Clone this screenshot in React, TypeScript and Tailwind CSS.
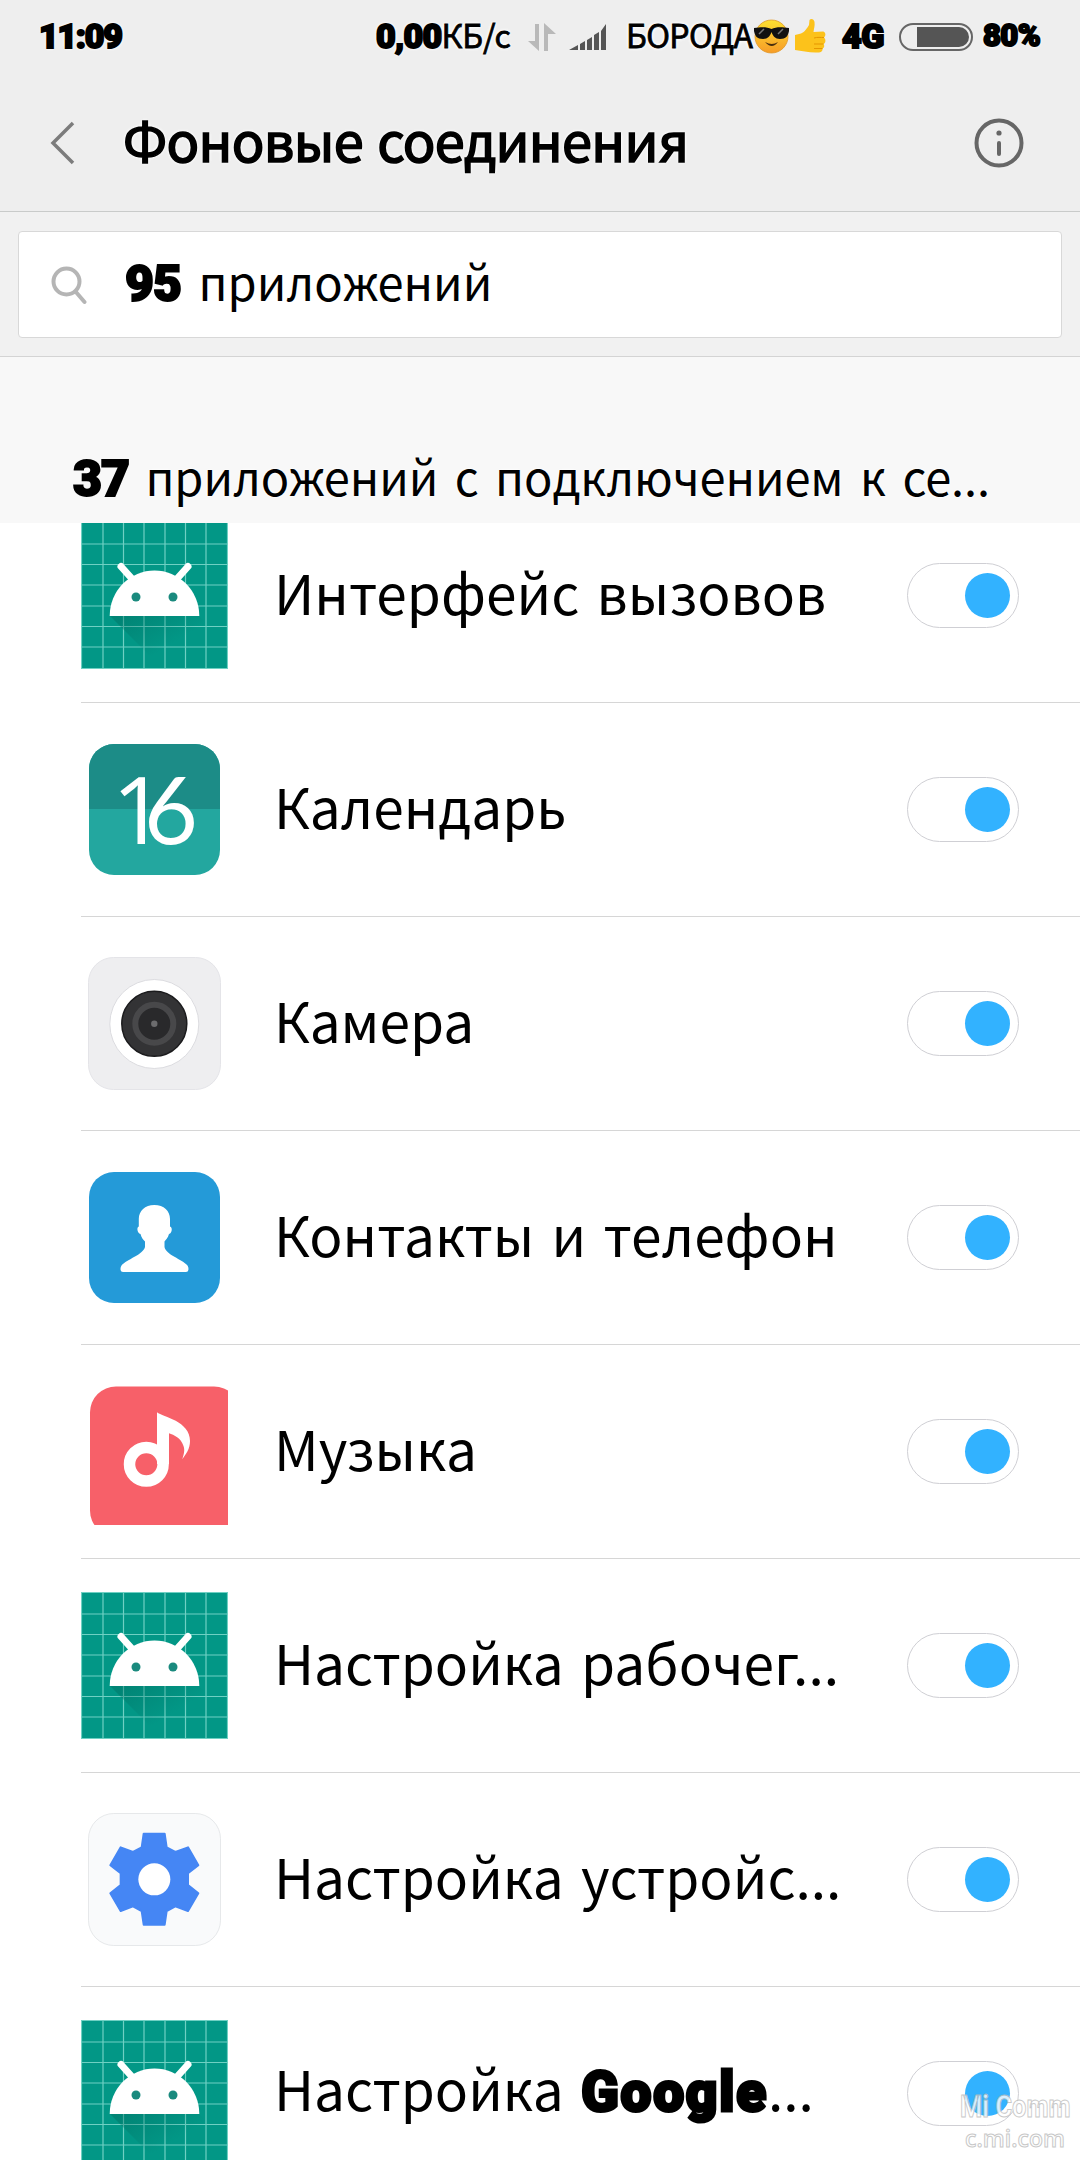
import { useState } from "react";
import type { ReactNode } from "react";

interface AppItem {
  id: number;
  name: ReactNode;
  icon: ReactNode;
}

function AndroidIcon() {
  const lines = [0.5, 22, 42.5, 63, 84, 104.5, 125, 146.5];
  return (
    <svg width="147" height="147" viewBox="0 0 147 147">
      <defs>
        <linearGradient id="shade" x1="45" y1="94" x2="70" y2="135" gradientUnits="userSpaceOnUse">
          <stop offset="0" stopColor="#00695c" stopOpacity="0.4" />
          <stop offset="1" stopColor="#00695c" stopOpacity="0" />
        </linearGradient>
      </defs>
      <rect width="147" height="147" fill="#029786" />
      {lines.map((p) => (
        <path key={p} d={`M${p} 0V147M0 ${p}H147`} stroke="#6fd0c3" strokeWidth="1.2" />
      ))}
      <path d="M29 94H118L147 123V147H82Z" fill="url(#shade)" />
      <path d="M40 44.5L53 59M107 44.5L94 59" stroke="#fff" strokeWidth="7" strokeLinecap="round" />
      <path d="M28.7 94A44.8 45.5 0 0 1 118.3 94Z" fill="#fff" />
      <circle cx="55" cy="75" r="4.5" fill="#1a8a7e" />
      <circle cx="92" cy="75" r="4.5" fill="#1a8a7e" />
    </svg>
  );
}

function CalendarIcon() {
  return (
    <svg width="131" height="131" viewBox="0 0 131 131">
      <defs>
        <clipPath id="cal">
          <rect width="131" height="131" rx="25" />
        </clipPath>
      </defs>
      <g clipPath="url(#cal)">
        <rect width="131" height="131" fill="#23a79f" />
        <rect width="131" height="65" fill="#1c8c87" />
      </g>
      <g fill="#fff">
        <text x="23" y="100" fontSize="94" fontFamily="Open Sans">
          1
        </text>
        <text x="55" y="100" fontSize="93" fontFamily="Lato">
          6
        </text>
      </g>
    </svg>
  );
}

function CameraIcon() {
  return (
    <svg width="133" height="133" viewBox="0 0 133 133">
      <rect x="0.5" y="0.5" width="132" height="132" rx="25" fill="#eeeef0" stroke="#e4e4e8" />
      <circle cx="66.3" cy="67" r="44.5" fill="#fff" stroke="#dcdce0" />
      <circle cx="66.3" cy="66.7" r="32.5" fill="#333335" stroke="#1b1b1d" strokeWidth="1.5" />
      <circle cx="66.3" cy="66.7" r="19" fill="#29292b" stroke="#48484a" strokeWidth="6" />
      <circle cx="66.3" cy="66.7" r="3.2" fill="#6c6c6e" />
    </svg>
  );
}

function ContactsIcon() {
  return (
    <svg width="131" height="131" viewBox="0 0 131 131">
      <rect width="131" height="131" rx="25" fill="#249ad8" />
      <path
        d="M65.3 33C75 33 81 39 81 47V54.5C83.5 55 83.5 61 80 62C79 66 77 67.5 75.5 69.5V75C77 83 93 87 98.5 93.5C100 96 100 100 97 100H34C31 100 31 96 32.5 93.5C38 87 54 83 56 75V69.5C54 67.5 52.5 66 51.5 62C48 61 47.5 55 49.8 54.5V47C49.8 39 56 33 65.3 33Z"
        fill="#fff"
      />
    </svg>
  );
}

function MusicIcon() {
  return (
    <svg width="147" height="147" viewBox="0 0 147 147">
      <rect x="9" y="8.5" width="150" height="150" rx="26" fill="#f76069" />
      <circle cx="65.3" cy="86.3" r="16.8" fill="none" stroke="#fff" strokeWidth="11.5" />
      <path
        d="M76 34.3C82 39 109 43 109 63C109 71 105 76 101.3 81.3C103 76 104 72 102.5 68C100 60 93 57 88 55.3V86H76Z"
        fill="#fff"
      />
    </svg>
  );
}

function GearIcon() {
  return (
    <svg width="133" height="133" viewBox="0 0 399 399">
      <rect x="1.5" y="1.5" width="396" height="396" rx="76" fill="#f9fafb" stroke="#e6e8ea" strokeWidth="3" />
      <path
        d="M167 62H230L236 103L262 117L300 103L331 157L300 181V216L331 241L300 294L262 280L236 294L230 335H167L161 294L135 280L98 294L67 241L98 216V181L67 157L98 103L135 117L161 103Z"
        fill="#4586f4"
        stroke="#4586f4"
        strokeWidth="6"
        strokeLinejoin="round"
      />
      <circle cx="199" cy="199" r="48" fill="#fff" />
    </svg>
  );
}

function Heavy({ children, className = "" }: { children: ReactNode; className?: string }) {
  return (
    <span className={`font-[Roboto] font-black [-webkit-text-stroke-color:#000] ${className}`}>
      {children}
    </span>
  );
}

const APPS: AppItem[] = [
  { id: 1, name: "Интерфейс вызовов", icon: <AndroidIcon /> },
  { id: 2, name: "Календарь", icon: <CalendarIcon /> },
  { id: 3, name: "Камера", icon: <CameraIcon /> },
  { id: 4, name: "Контакты и телефон", icon: <ContactsIcon /> },
  { id: 5, name: "Музыка", icon: <MusicIcon /> },
  { id: 6, name: "Настройка рабочег...", icon: <AndroidIcon /> },
  { id: 7, name: "Настройка устройс...", icon: <GearIcon /> },
  {
    id: 8,
    name: (
      <>
        Настройка{" "}
        <Heavy className="tracking-[1.8px] [-webkit-text-stroke-width:3px]">Google</Heavy>...
      </>
    ),
    icon: <AndroidIcon />,
  },
];

function Toggle({ on, onClick }: { on: boolean; onClick: () => void }) {
  return (
    <button
      role="switch"
      aria-checked={on}
      onClick={onClick}
      className={`flex h-[65px] w-[112px] shrink-0 items-center rounded-full border border-[#cfcfd4] bg-white px-2 ${
        on ? "justify-end" : "justify-start"
      }`}
    >
      <span className={`size-[45px] rounded-full ${on ? "bg-[#32b2ff]" : "bg-gray-300"}`} />
    </button>
  );
}

function StatusBar() {
  return (
    <div className="flex h-[74px] items-center text-[32px] leading-none whitespace-nowrap">
      <Heavy className="mb-[3px] ml-[39px] w-[337px] text-[34px] tracking-[-1.3px] [-webkit-text-stroke-width:2px]">
        11:09
      </Heavy>
      <div className="mb-[7px] flex w-[151px] items-center">
        <Heavy className="mt-1 text-[34px] tracking-[-0.7px] [-webkit-text-stroke-width:2px]">0,00</Heavy>
        <span className="[-webkit-text-stroke:0.8px_#000]">КБ/с</span>
      </div>
      <svg width="30" height="30" viewBox="0 0 30 30" className="shrink-0" fill="#b9b9b9">
        <path d="M8 2H12V29L1 19H8Z" />
        <path d="M17 29H21V12H29L17 1Z" />
      </svg>
      <svg width="38" height="28" viewBox="0 0 38 28" className="ml-3 shrink-0" fill="#555">
        <path d="M0 27L9 22V27ZM11 21L16 18V27H11ZM18 17L23 14V27H18ZM25 12L30 9V27H25ZM32 8L37 1V27H32Z" />
      </svg>
      <span className="mb-[7px] ml-[19px] w-[128px] tracking-[-0.6px] [-webkit-text-stroke:0.8px_#000]">
        БОРОДА
      </span>
      <svg width="35" height="35" viewBox="0 0 35 35" className="mb-0.5 shrink-0">
        <defs>
          <linearGradient id="face" x1="0" y1="0" x2="0" y2="1">
            <stop offset="0" stopColor="#fde030" />
            <stop offset="1" stopColor="#f79c28" />
          </linearGradient>
        </defs>
        <circle cx="17.5" cy="17.5" r="16.5" fill="url(#face)" stroke="#e0982a" strokeWidth="0.8" />
        <path
          d="M0 9C8 8 13 8 17.5 10C22 8 27 8 35 9V12C34 17 32 20 26 20C21 20 19 17 17.5 13C16 17 14 20 9 20C3 20 1 17 0 12Z"
          fill="#111"
        />
        <path d="M5 15L10 10M24 15L29 10" stroke="#777" strokeWidth="1.5" />
        <path d="M11 23Q18 27 24 23Q18 31 11 23Z" fill="#4a2f0e" />
      </svg>
      <svg width="32" height="35" viewBox="0 0 32 35" className="mb-1 ml-[5px] shrink-0">
        <path
          d="M1 17L7 15.5C11 14 13 10 15 7L15.5 2C17 0 20 1 20.5 4C21 8 20 10 19.5 14L29 13.5C32 14 32 18 30 19.5C32 21 32 25 29.5 26C31 28 30 30 28.5 30.5C29 33 27 34.5 24 34.5C16 35 8 33 1 32Z"
          fill="#fcc21b"
        />
        <path d="M20 20C23 19 27 19.5 30 19.5M20 26H29.5M20 30.5H28.5" fill="none" stroke="#e59600" />
      </svg>
      <Heavy className="mb-0.5 ml-4 w-[57px] text-[34px] tracking-[-0.5px] [-webkit-text-stroke-width:2px]">
        4G
      </Heavy>
      <div className="flex h-7 w-[74px] shrink-0 items-center justify-end rounded-full border-2 border-[#666] pr-0.5">
        <div className="h-5 w-[52px] rounded-r-full bg-[#555]" />
      </div>
      <Heavy className="mb-[3px] ml-2.5 text-[31px] tracking-[-0.6px] [-webkit-text-stroke-width:2px]">
        80%
      </Heavy>
    </div>
  );
}

export default function App() {
  const [off, setOff] = useState<number[]>([]);

  const toggle = (id: number) => {
    setOff((prev) => (prev.includes(id) ? prev.filter((x) => x !== id) : [...prev, id]));
  };

  return (
    <div className="relative flex h-[2160px] w-[1080px] flex-col overflow-hidden bg-white font-['Noto_Sans_CJK_SC',sans-serif] text-black">
      <header className="h-[212px] shrink-0 border-b border-[#c9cbca] bg-[#eeeeee] [text-shadow:0_0_4px_#fff,0_0_4px_#fff,0_0_3px_#fff]">
        <StatusBar />
        <div className="flex h-[137px] items-center pr-[56px] pl-[50px]">
          <svg width="25" height="44" viewBox="0 0 25 44" fill="none" stroke="#7c7c7c" strokeWidth="3.5">
            <path d="M23 2L3 22L23 42" />
          </svg>
          <h1 className="mb-2 ml-[48px] flex-1 text-[54px] leading-none tracking-[-0.7px] whitespace-nowrap [word-spacing:3px] [-webkit-text-stroke:1.6px_#000]">
            Фоновые соединения
          </h1>
          <svg width="50" height="50" viewBox="0 0 50 50" fill="none" stroke="#666" strokeWidth="4">
            <circle cx="25" cy="25" r="22.5" />
            <path d="M25 25V36" strokeLinecap="round" />
            <circle cx="25" cy="15" r="2.6" fill="#666" stroke="none" />
          </svg>
        </div>
      </header>

      <div className="h-[145px] shrink-0 border-b border-[#d4d4d4] bg-[#f1f1f1] px-[18px] pt-[19px]">
        <div className="flex h-[107px] items-center rounded border border-[#d8d8d8] bg-white pl-[32px]">
          <svg width="36" height="40" viewBox="0 0 36 40" fill="none" stroke="#b5b5b5" strokeWidth="4" strokeLinecap="round">
            <circle cx="15.5" cy="16.5" r="13" />
            <path d="M24.5 26.5L33.5 37" />
          </svg>
          <p className="mb-1 ml-[38px] text-[47px] leading-none whitespace-nowrap [word-spacing:7px]">
            <Heavy className="text-[50px] tracking-[-1px] [-webkit-text-stroke-width:2px]">95</Heavy> приложений
          </p>
        </div>
      </div>

      <div className="flex h-[166px] shrink-0 items-end bg-[#f8f8f8] pb-[18px] pl-[73px]">
        <p className="text-[47px] leading-[58px] tracking-[-0.1px] whitespace-nowrap [word-spacing:6px] [text-shadow:0_0_3px_#fff,0_0_3px_#fff]">
          <Heavy className="text-[50px] leading-none tracking-[-1px] [-webkit-text-stroke-width:2px]">37</Heavy>{" "}
          приложений с подключением к се...
        </p>
      </div>

      <main className="min-h-0 flex-1 overflow-hidden">
        <ul className="-mt-[34px] ml-[81px]">
          {APPS.map((app) => (
            <li key={app.id} className="flex h-[214px] items-center border-b border-[#d6d6d6] pr-[61px]">
              <div className="flex size-[147px] shrink-0 items-center justify-center">{app.icon}</div>
              <span className="mb-[9px] ml-[46px] flex-1 text-[55px] leading-[64px] whitespace-nowrap [word-spacing:5px]">
                {app.name}
              </span>
              <Toggle on={!off.includes(app.id)} onClick={() => toggle(app.id)} />
            </li>
          ))}
        </ul>
      </main>

      <div className="absolute right-2 bottom-2 flex w-[114px] flex-col items-center whitespace-nowrap text-white opacity-80">
        <span className="scale-x-[0.82] font-[Roboto] text-[31px] leading-[34px] font-bold [-webkit-text-stroke:1px_#bbb]">
          Mi Comm
        </span>
        <span className="font-['Open_Sans'] text-[23px] leading-[28px] font-semibold [-webkit-text-stroke:1px_#bbb]">
          c.mi.com
        </span>
      </div>
    </div>
  );
}
